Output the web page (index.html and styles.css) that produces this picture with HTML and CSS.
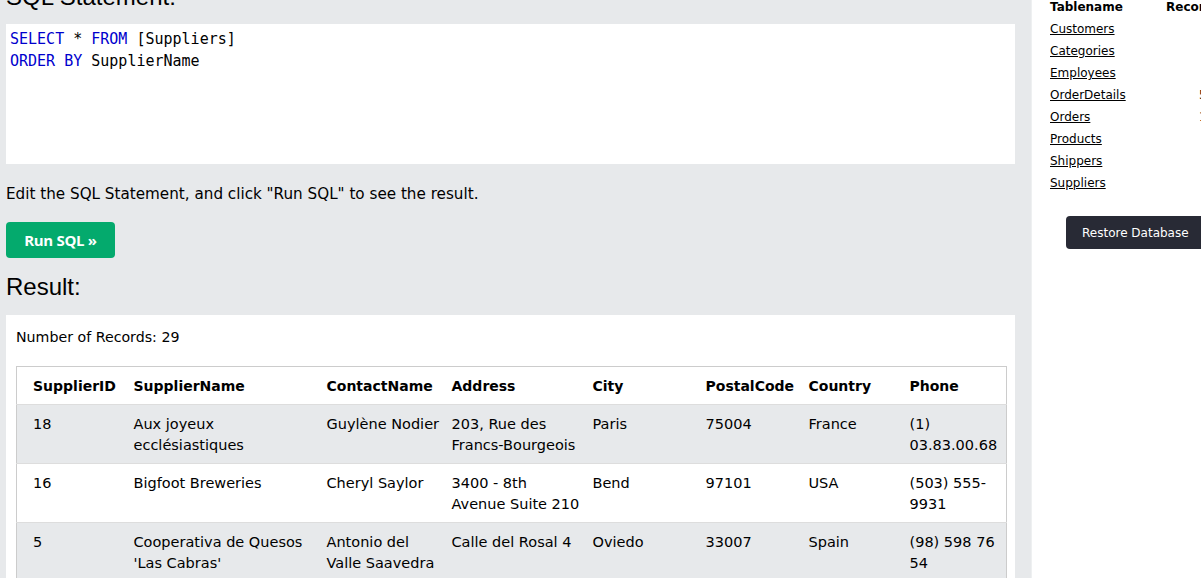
FILE: index.html
```html
<!DOCTYPE html>
<html>
<head>
<meta charset="utf-8">
<link rel="stylesheet" href="styles.css">
</head>
<body>
<div class="page">
  <div class="main">
    <h2 class="heading top">SQL Statement:</h2>
    <div class="code"><span class="kw">SELECT</span> * <span class="kw">FROM</span> [Suppliers]<br><span class="kw">ORDER BY</span> SupplierName</div>
    <p class="hint">Edit the SQL Statement, and click "Run SQL" to see the result.</p>
    <button class="run">Run SQL »</button>
    <h2 class="heading result-title">Result:</h2>
    <div class="result">
      <div class="count">Number of Records: 29</div>
      <table class="data">
        <colgroup>
          <col style="width:109px"><col style="width:193px"><col style="width:125px"><col style="width:141px"><col style="width:113px"><col style="width:103px"><col style="width:101px"><col style="width:105px">
        </colgroup>
        <tr><th>SupplierID</th><th>SupplierName</th><th>ContactName</th><th>Address</th><th>City</th><th>PostalCode</th><th>Country</th><th>Phone</th></tr>
        <tr><td>18</td><td>Aux joyeux<br>ecclésiastiques</td><td>Guylène Nodier</td><td>203, Rue des<br>Francs-Bourgeois</td><td>Paris</td><td>75004</td><td>France</td><td>(1)<br>03.83.00.68</td></tr>
        <tr><td>16</td><td>Bigfoot Breweries</td><td>Cheryl Saylor</td><td>3400 - 8th<br>Avenue Suite 210</td><td>Bend</td><td>97101</td><td>USA</td><td>(503) 555-<br>9931</td></tr>
        <tr><td>5</td><td>Cooperativa de Quesos<br>'Las Cabras'</td><td>Antonio del<br>Valle Saavedra</td><td>Calle del Rosal 4</td><td>Oviedo</td><td>33007</td><td>Spain</td><td>(98) 598 76<br>54</td></tr>
        <tr><td>27</td><td>Escargots Nouveaux</td><td>Marie Delamare</td><td>22, rue H. Voiron</td><td>Montceau</td><td>71300</td><td>France</td><td>85.57.00.07</td></tr>
      </table>
    </div>
  </div>
  <div class="side">
    <table class="tables">
      <tr><th class="tn">Tablename</th><th class="rc">Records</th></tr>
      <tr><td><a href="#">Customers</a></td><td class="num">91</td></tr>
      <tr><td><a href="#">Categories</a></td><td class="num">8</td></tr>
      <tr><td><a href="#">Employees</a></td><td class="num">10</td></tr>
      <tr><td><a href="#">OrderDetails</a></td><td class="num">518</td></tr>
      <tr><td><a href="#">Orders</a></td><td class="num">196</td></tr>
      <tr><td><a href="#">Products</a></td><td class="num">77</td></tr>
      <tr><td><a href="#">Shippers</a></td><td class="num">3</td></tr>
      <tr><td><a href="#">Suppliers</a></td><td class="num">29</td></tr>
    </table>
    <button class="restore">Restore Database</button>
  </div>
</div>
</body>
</html>
```

FILE: styles.css
```css
html, body {
  margin: 0;
  padding: 0;
  height: 578px;
  overflow: hidden;
}
body {
  font-family: "DejaVu Sans", Verdana, sans-serif;
  font-size: 15px;
  color: #000;
  background: #fff;
}
.page {
  display: flex;
  height: 578px;
}
.main {
  width: 1032px;
  flex: 0 0 1032px;
  box-sizing: border-box;
  background: #e7e9eb;
  padding: 0 16px 0 6px;
  border-right: 1px solid #eef0f1;
}
.heading {
  font-family: "Liberation Sans", Arial, sans-serif;
  font-weight: normal;
  font-size: 24px;
  line-height: 28px;
  margin: 0;
}
.top {
  margin-top: -17px;
}
.code {
  margin-top: 13px;
  height: 140px;
  box-sizing: border-box;
  background: #fff;
  padding: 4px 4px;
  font-family: "DejaVu Sans Mono", "Liberation Mono", monospace;
  font-size: 15px;
  line-height: 22px;
  color: #000;
}
.kw {
  color: #0000cd;
}
.hint {
  margin: 19px 0 0;
  font-size: 15.2px;
  line-height: 22px;
  height: 22px;
}
.run {
  display: block;
  margin-top: 17px;
  width: 109px;
  height: 36px;
  border: none;
  border-radius: 4px;
  background: #04aa6d;
  color: #fff;
  font-family: "Open Sans", "Noto Sans", sans-serif;
  font-weight: bold;
  font-size: 15px;
  letter-spacing: -0.3px;
  padding: 0;
}
.result-title {
  margin-top: 15px;
}
.result {
  margin-top: 14px;
  background: #fff;
  padding: 10px 10px;
  height: 400px;
}
.count {
  font-size: 14.2px;
  line-height: 22px;
  padding-top: 1px;
  height: 21px;
}
.data {
  margin-top: 19px;
  width: 990px;
  table-layout: fixed;
  border-collapse: collapse;
  border: 1px solid #ccc;
}
.data th, .data td {
  padding: 9px 8px 7px;
  font-size: 14.5px;
  line-height: 21px;
  text-align: left;
  vertical-align: top;
  white-space: nowrap;
  overflow: hidden;
  border-bottom: 1px solid #ddd;
}
.data th:first-child, .data td:first-child {
  padding-left: 16px;
}
.data th {
  font-weight: bold;
  font-size: 14px;
  background: #fff;
}
.data tr:nth-child(even) td {
  background: #e7e9eb;
}
.side {
  flex: 1;
  overflow: hidden;
  padding-left: 18px;
  position: relative;
}
.tables {
  margin-top: -4px;
  border-collapse: collapse;
  font-size: 12px;
  width: 172px;
}
.tables th, .tables td {
  padding: 0;
  height: 22px;
  line-height: 22px;
  text-align: left;
  white-space: nowrap;
}
.tables .tn {
  width: 116px;
}
.tables .rc {
  width: 56px;
}
.tables td.num {
  text-align: right;
}
.tables a {
  color: #000;
  text-decoration: underline;
}
.restore {
  display: block;
  margin: 22px 0 0 16px;
  height: 33px;
  white-space: nowrap;
  border: none;
  border-radius: 4px;
  background: #282a35;
  color: #fff;
  font-family: "DejaVu Sans", Verdana, sans-serif;
  font-size: 12px;
  padding: 0 16px;
  width: 150px;
  text-align: left;
}
```
